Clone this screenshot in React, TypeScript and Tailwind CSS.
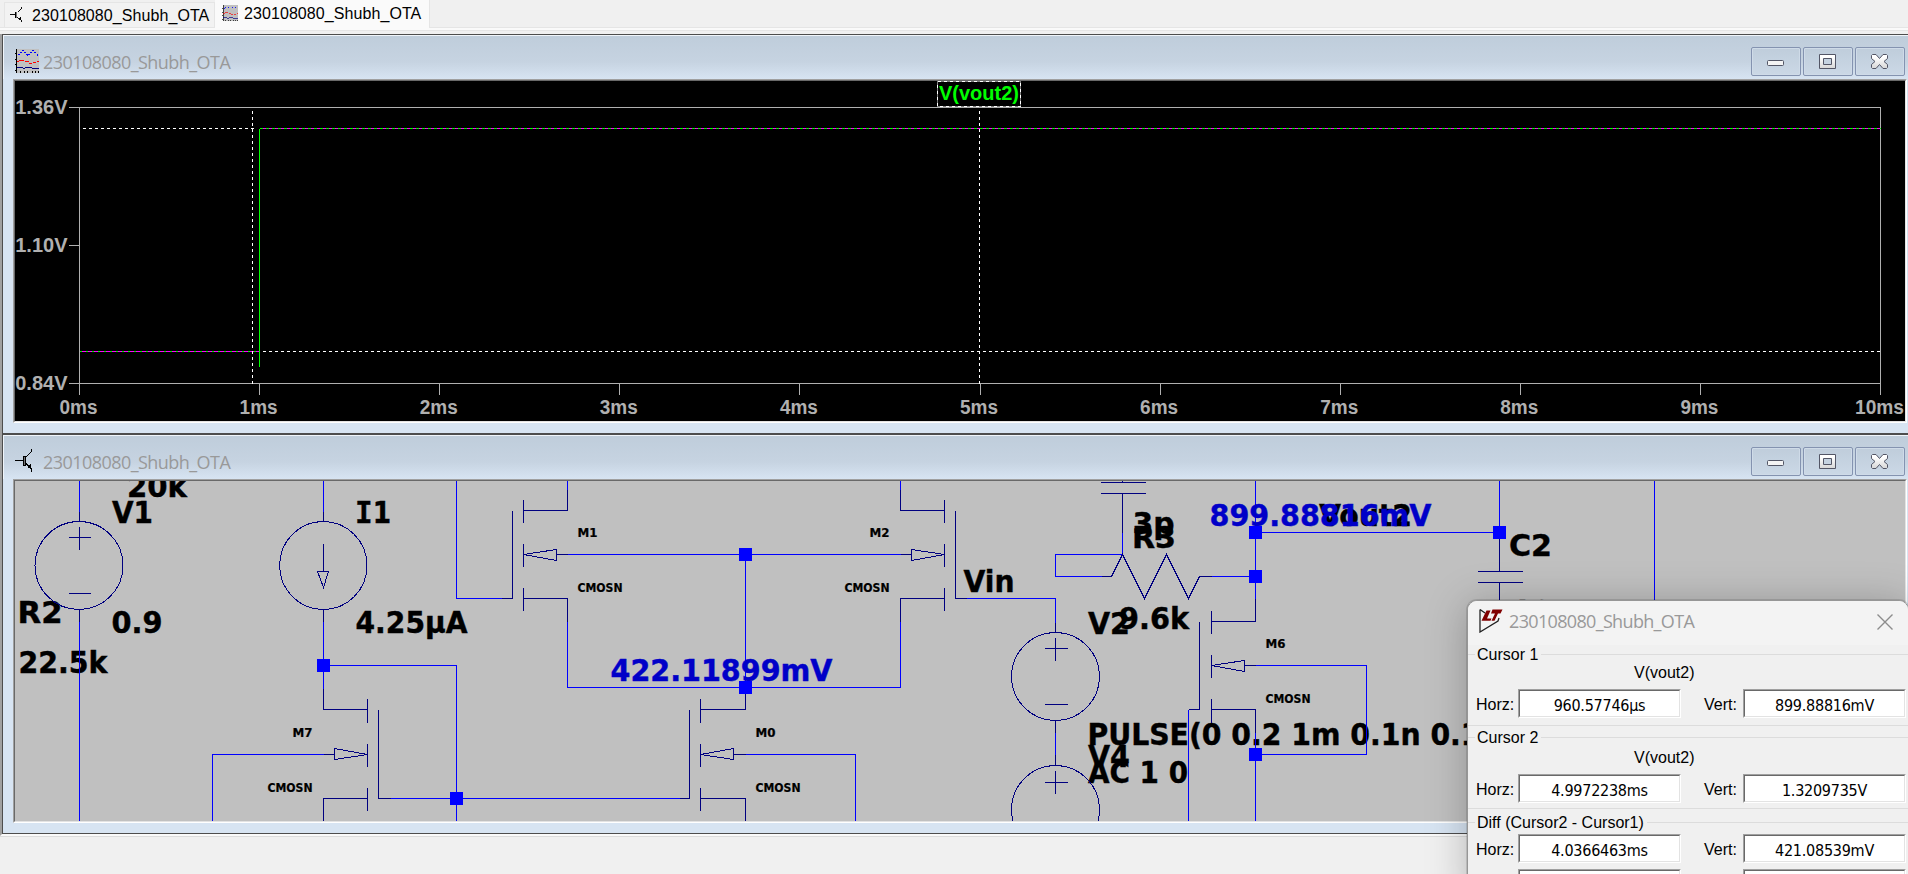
import React from "react";

const TITLE = "230108080_Shubh_OTA";

function TransistorIcon({ className }: { className: string }) {
  return (
    <svg className={className} viewBox="0 0 24 24" fill="none" stroke="#000" shapeRendering="crispEdges">
      <path d="M0 11.5H8M11 8L16.5 2.500V0M11 15L16.5 20V23" strokeWidth="1.4" />
      <path d="M8 7h3v10h-3z" fill="#000" stroke="none" />
      <path d="M9 8h1v8h-1z" fill="#777" stroke="none" />
      <path d="M12 18l4-3v5z" fill="#000" stroke="none" />
    </svg>
  );
}

function WaveIcon({ className }: { className: string }) {
  return (
    <svg className={className} viewBox="0 0 24 24" fill="none" shapeRendering="crispEdges">
      <rect x="1" width="23" height="24" fill="#c0c0c0" />
      <path d="M1.500 0V24M0 4.500H1M0 10.500H1M0 15.500H1M0 21.500H1M5.500 22V24M9.500 22V24M12.500 22V24M17.500 22V24M20.500 22V24M23.500 22V24" stroke="#000" />
      <path d="M3 6L8 1.500L13 7L18 1.500L23 7" stroke="#0000ff" strokeDasharray="1.500 1.500" strokeWidth="1.300" />
      <path d="M2 12.500H4M4 11.500H9M10 12.500H14M14 14.500H17M18 13.500H21M22 12.500H24" stroke="#ff0000" />
      <path d="M2 18.500H8M8 19.500H10M10 18.500H17M17 19.500H24" stroke="#000080" />
    </svg>
  );
}

function CaptionButton({ kind }: { kind: "min" | "max" | "close" }) {
  return (
    <div className="flex h-[29px] w-[50px] items-center justify-center rounded-[2px] border border-[#8493b0] bg-gradient-to-b from-[#bfcddb] to-[#cbd8e6] shadow-[inset_0_0_0_1px_#cfdbe8]">
      <svg width="48" height="27" viewBox="0 0 48 27">
        <defs>
          <linearGradient id={"glyph-" + kind} x1="0" y1="0" x2="0" y2="1">
            <stop offset="0.2" stopColor="#ffffff" />
            <stop offset="1" stopColor="#d6d6d6" />
          </linearGradient>
        </defs>
        {kind === "min" && (
          <rect x="15.5" y="12.500" width="16" height="5" rx="1" fill="#f4f4f4" stroke="#535666" />
        )}
        {kind === "max" && (
          <path fillRule="evenodd" d="M15.500 6.500h16v14h-16zM19.500 10.500h8v6h-8z" fill="url(#glyph-max)" stroke="#535666" strokeLinejoin="round" />
        )}
        {kind === "close" && (
          <path d="M16.500 6.500h3.500l3.500 4l3.500-4h3.500l1 1v3l-3.500 3l3.500 3v3l-1 1h-3.500l-3.500-4l-3.500 4h-3.500l-1-1v-3l3.500-3l-3.500-3v-3z" fill="url(#glyph-close)" stroke="#535666" strokeLinejoin="round" />
        )}
      </svg>
    </div>
  );
}

function ChildWindow({ icon, children }: { icon: React.ReactNode; children: React.ReactNode }) {
  return (
    <section className="flex h-[400px] shrink-0 flex-col border-b border-l border-t border-[#4d4d4d] bg-[#d7e4f2]">
      <div className="flex h-[44px] shrink-0 items-start border-l border-t border-[#f0f5fa] bg-[linear-gradient(#bfcddb,#c6d3e1_60%,#d7e4f2)] pl-[11px] pr-[3px]">
        <div className="mt-[13px] h-6 w-6">{icon}</div>
        <span className="ml-[4px] mt-[13px] font-['Open_Sans','Noto_Sans',sans-serif] text-[18px] leading-[26px] tracking-[-0.55px] text-[#999999]">{TITLE}</span>
        <div className="ml-auto mt-[11px] flex gap-[2px]">
          <CaptionButton kind="min" />
          <CaptionButton kind="max" />
          <CaptionButton kind="close" />
        </div>
      </div>
      <div className="ml-[10px] mr-px h-[344px] shrink-0 border-b border-r border-b-white border-r-white border-l border-t border-l-[#a0a0a0] border-t-[#a0a0a0]">
        <div className="h-[342px] border-b border-r border-b-[#e3e3e3] border-r-[#e3e3e3] border-l border-t border-l-[#696969] border-t-[#696969]">
          {children}
        </div>
      </div>
    </section>
  );
}

const ticks = [0, 1, 2, 3, 4, 5, 6, 7, 8, 9, 10];

function Plot() {
  return (
    <svg className="block bg-black" width="1890" height="340" viewBox="15 81 1890 340">
      <g transform="translate(0.5 0.5)" shapeRendering="crispEdges" fill="none">
        <path d="M68 107H1880V394M79 107V394M68 383H1880M68 245H79" stroke="#b0b0b0" />
        {ticks.map((t) => (
          <path key={t} d={`M${Math.round(79 + t * 180.1)} 383V394`} stroke="#b0b0b0" />
        ))}
        <path d="M82 128H256M262 351H1880" stroke="#fff" strokeDasharray="3 3" />
        <path d="M259 128H1880" stroke="#ff00ff" />
        <path d="M259 128H1880" stroke="#00ff00" strokeDasharray="3 3" />
        <path d="M79 351H259" stroke="#ff00ff" />
        <path d="M79 351H259" stroke="#00ff00" strokeDasharray="2 4" />
        <path d="M259 128V366" stroke="#00ff00" />
        <path d="M252 110V383M979 110V383" stroke="#fff" strokeDasharray="3 3" />
        <path d="M937 81H1020V106H937Z" stroke="#808080" />
        <path d="M937 81H1020V106H937Z" stroke="#fff" strokeDasharray="3 3" />
      </g>
      <g className="font-['Liberation_Sans',Arial,sans-serif] text-[20px] font-bold" fill="#b0b0b0">
        <text x="67.500" y="113.500" textAnchor="end">1.36V</text>
        <text x="67.500" y="251.500" textAnchor="end">1.10V</text>
        <text x="67.500" y="389.500" textAnchor="end">0.84V</text>
        {ticks.map((t) => (
          <text key={t} x={78.5 + t * 180.1} y="413.500" textAnchor="middle" textLength={t === 10 ? 49 : 38} lengthAdjust="spacingAndGlyphs">{t}ms</text>
        ))}
        <text x="979" y="100" textAnchor="middle" fill="#00ff00">V(vout2)</text>
      </g>
    </svg>
  );
}

const nodes = [
  [323, 665], [456, 798], [745, 554], [745, 687],
  [1255, 532], [1255, 576], [1255, 754], [1499, 532],
];

type LabelProps = { x: number; y: number; w: number; end?: boolean; children: React.ReactNode };

function Label({ x, y, w, end, children }: LabelProps) {
  return (
    <text x={x} y={y} textLength={w} lengthAdjust="spacingAndGlyphs" textAnchor={end ? "end" : "start"}>
      {children}
    </text>
  );
}

function Schematic() {
  return (
    <svg className="block bg-[#c0c0c0]" width="1890" height="340" viewBox="15 481 1890 340">
      <g className="font-['DejaVu_Sans_Condensed','DejaVu_Sans',sans-serif] text-[31px] font-bold" fill="#000" stroke="#000" strokeWidth="0.4">
        <Label x={127} y={496.500} w={60}>20k</Label>
        <Label x={112} y={522.500} w={41}>V1</Label>
        <Label x={355} y={522.500} w={36}><tspan className="font-['DejaVu_Sans_Mono',monospace]">I</tspan>1</Label>
        <Label x={111.500} y={633} w={51}>0.9</Label>
        <Label x={355.500} y={633} w={112}>4.25µA</Label>
        <Label x={17.500} y={622.500} w={45}>R2</Label>
        <Label x={18.500} y={672.500} w={89}>22.5k</Label>
        <Label x={963.500} y={591.500} w={51}>Vin</Label>
        <Label x={1088} y={633.500} w={42}>V2</Label>
        <Label x={1119} y={628.500} w={70}>9.6k</Label>
        <Label x={1087.500} y={744.500} w={393}>PULSE(0 0.2 1m 0.1n 0.1</Label>
        <Label x={1088} y={767} w={42}>V4</Label>
        <Label x={1088} y={782.500} w={100}>AC 1 0</Label>
        <Label x={1132.500} y={534} w={42}>3p</Label>
        <Label x={1132} y={547.500} w={44}>R3</Label>
        <Label x={1319} y={525.500} w={93}>Vout2</Label>
        <Label x={1509} y={555.500} w={43}>C2</Label>
        <Label x={1512} y={621.500} w={60}>10p</Label>
      </g>
      <g className="font-['DejaVu_Sans_Condensed','DejaVu_Sans',sans-serif] text-[12px] font-bold" fill="#000" stroke="#000" strokeWidth="0.2">
        <Label x={312.500} y={736.500} w={20} end>M7</Label>
        <Label x={312.500} y={791.500} w={45} end>CMOSN</Label>
        <Label x={577.500} y={536.500} w={20}>M1</Label>
        <Label x={577.500} y={591.500} w={45}>CMOSN</Label>
        <Label x={889.500} y={536.500} w={20} end>M2</Label>
        <Label x={889.500} y={591.500} w={45} end>CMOSN</Label>
        <Label x={755.500} y={736.500} w={20}>M0</Label>
        <Label x={755.500} y={791.500} w={45}>CMOSN</Label>
        <Label x={1265.500} y={647.500} w={20}>M6</Label>
        <Label x={1265.500} y={702.500} w={45}>CMOSN</Label>
      </g>
      <g transform="translate(0.5 0.5)" shapeRendering="crispEdges" fill="none">
        <path
          stroke="#0000ff"
          d="M79 480V511M79 621V821M323 480V511M323 621V688M323 665H456V821M456 480V598H501M212 821V754H323M390 798H679M567 480V489M567 554H900M745 554V687M567 621V687H900V621M900 480V489M745 754H855V821M966 598H1055V622M1122 532V554H1055V576H1101M1211 576H1255M1255 480V598M1255 532H1499V480M1055 732V754M1188 821V709M1255 665H1366V754H1255M1255 732V821M1654 480V602"
        />
        <g stroke="#000080">
          <path d="M79 511V521M79 609V621M68 537H90M79 526V549M68 593H90" />
          <circle cx="78.500" cy="565" r="44" />
          <path d="M323 511V521M323 609V621M323 543V571M317 571H328L323 587Z" />
          <ellipse cx="322.800" cy="565" rx="43.700" ry="44" />
          <path d="M323 688V709H367M367 698V722M378 709V798H390M367 743V766M334 748V759L367 754ZM323 754H334M367 787V810M367 798H323V821" />
          <path d="M501 598H512V510M523 499V522M523 543V566M523 587V610M523 510H567V489M556 549V560L523 554ZM556 554H567M523 598H567V621" />
          <path d="M966 598H955V510M944 499V522M944 543V566M944 587V610M944 510H900V489M911 549V560L944 554ZM911 554H900M944 598H900V621" />
          <path d="M679 798H689V709M700 698V722M700 743V766M700 787V810M700 709H745V687M733 748V759L700 754ZM733 754H745M700 798H745V821" />
          <path d="M1188 709H1199V621M1211 610V633M1211 654V677M1211 698V722M1211 621H1255V598M1244 660V671L1211 665ZM1244 665H1255M1211 709H1255V732" />
          <path d="M1122 480V482M1100 482H1145M1100 493H1145M1122 493V532M1101 576H1111L1122 554L1144 598L1166 554L1188 598L1199 576H1211" />
          <path d="M1055 622V632M1044 648H1067M1055 637V660M1044 704H1067M1055 720V732M1055 754V765M1044 782H1067M1055 770V793" />
          <circle cx="1055" cy="676" r="44" />
          <circle cx="1055" cy="809" r="44" />
          <path d="M1499 532V571M1477 571H1522M1477 582H1522M1499 582V602" />
        </g>
      </g>
      <g className="font-['DejaVu_Sans_Condensed','DejaVu_Sans',sans-serif] text-[31px] font-bold" fill="#0000c8" stroke="#0000c8" strokeWidth="0.4">
        <Label x={610.500} y={680.500} w={222}>422.11899mV</Label>
        <Label x={1209.500} y={525.500} w={222}>899.88816mV</Label>
      </g>
      {nodes.map(([x, y]) => (
        <rect key={`${x}-${y}`} x={x - 6} y={y - 6} width="13" height="13" fill="#0000ff" />
      ))}
    </svg>
  );
}

function Field({ label, value, vert }: { label: string; value?: string; vert?: boolean }) {
  return (
    <div className={vert ? "flex w-[202px] items-center" : "flex w-[205px] items-center"}>
      <span className={vert ? "w-[39px] pt-[2px] text-[16px]" : "w-[42px] pt-[2px] text-[16px]"}>{label}</span>
      <div className="h-[29px] w-[163px] border-b border-l border-r border-t border-b-white border-l-[#a0a0a0] border-r-white border-t-[#a0a0a0]">
        <div className="h-[27px] border-b border-l border-r border-t border-b-[#e3e3e3] border-l-[#696969] border-r-[#e3e3e3] border-t-[#696969] bg-white pt-px text-center font-['DejaVu_Sans_Condensed','DejaVu_Sans',sans-serif] text-[16px] leading-[27px] tracking-[-0.25px]">
          {value}
        </div>
      </div>
    </div>
  );
}

function FieldRow({ horz, vert }: { horz?: string; vert?: string }) {
  return (
    <div className="flex h-[29px] justify-between pl-[8px] pr-[2px]">
      <Field label={horz ? "Horz:" : ""} value={horz} />
      <Field label={vert ? "Vert:" : ""} value={vert} vert />
    </div>
  );
}

function GroupLabel({ text }: { text: string }) {
  return (
    <div className="flex h-[18px] items-center">
      <div className="h-px w-[7px] bg-[#dcdcdc]" />
      <span className="mt-[2px] whitespace-pre pl-[2px] pr-[3px] text-[16px] leading-[18px]">{text}</span>
      <div className="h-px flex-1 bg-[#dcdcdc]" />
    </div>
  );
}

function CursorDialog() {
  return (
    <div className="absolute left-[1467px] top-[600px] flex h-[300px] w-[442px] flex-col overflow-hidden rounded-[10px] border border-[#969696] bg-[#f0f0f0] font-['Liberation_Sans',Arial,sans-serif] text-black shadow-[0_0_0_1px_rgba(0,0,0,0.12),0_4px_40px_rgba(0,0,0,0.25)]">
      <div className="flex h-[44px] shrink-0 items-start bg-[#f3f3f3] pl-[11px] pr-[15px]">
        <svg className="mt-[8px]" width="24" height="24" viewBox="0 0 24 24">
          <path d="M1 0.500V23L19 12L20 9M1 0.500L6 4" fill="none" stroke="#222" strokeWidth="1.300" />
          <path d="M7.500 1.500H11.500L8 9.500H12.500L11.500 11.800H2.500L6.500 3.500Z" fill="#800000" />
          <path d="M13.500 0.500H23.500L21.500 4.500H19L15.500 11.800H12.500L16 4.500H12Z" fill="#800000" />
        </svg>
        <span className="ml-[6px] mt-[7px] font-['Open_Sans','Noto_Sans',sans-serif] text-[18px] leading-[26px] tracking-[-0.66px] text-[#999999]">{TITLE}</span>
        <svg className="ml-auto mt-[13px]" width="16" height="16" viewBox="0 0 16 16">
          <path d="M0.500 0.500L15.500 15.500M15.500 0.500L0.500 15.500" stroke="#8c8c8c" strokeWidth="1.400" />
        </svg>
      </div>
      <div className="flex h-[81px] shrink-0 flex-col border-b border-[#dcdcdc]">
        <GroupLabel text="Cursor 1" />
        <div className="-mt-px h-[27px] pl-[166px] pt-[2px] text-[16px] leading-[18px]">V(vout2)</div>
        <FieldRow horz="960.57746µs" vert="899.88816mV" />
      </div>
      <div className="flex h-[83px] shrink-0 flex-col border-b border-[#dcdcdc] pt-[2px]">
        <GroupLabel text="Cursor 2" />
        <div className="h-[28px] pl-[166px] pt-[3px] text-[16px] leading-[18px]">V(vout2)</div>
        <FieldRow horz="4.9972238ms" vert="1.3209735V" />
      </div>
      <div className="flex shrink-0 flex-col pt-[4px]">
        <GroupLabel text="Diff (Cursor2 - Cursor1)" />
        <div className="mt-[3px] flex flex-col gap-[6px]">
          <FieldRow horz="4.0366463ms" vert="421.08539mV" />
          <FieldRow />
        </div>
      </div>
    </div>
  );
}

export default function App() {
  return (
    <div className="relative h-[874px] w-[1908px] overflow-hidden bg-[#f0f0f0]">
      <div className="flex h-[28px] items-end border-b border-[#e5e5e5] pl-[4px] font-['Liberation_Sans',Arial,sans-serif] text-[16px] tracking-[0.08px] text-black">
        <div className="flex h-[25px] w-[211px] items-center border border-b-0 border-[#e5e5e5] bg-[#f2f2f2] pl-[5px]">
          <TransistorIcon className="h-4 w-4" />
          <span className="ml-[6px] mt-px leading-[18px]">{TITLE}</span>
        </div>
        <div className="-mb-px flex h-[28px] w-[215px] items-center border-r border-[#e5e5e5] bg-[#fafafa] pb-[2px] pl-[7px]">
          <WaveIcon className="h-4 w-4" />
          <span className="ml-[6px] mt-px leading-[18px]">{TITLE}</span>
        </div>
      </div>
      <div className="h-[2px] bg-[#fafafa]" />
      <div className="h-[4px] border-t border-[#e5e5e5]" />
      <div className="flex h-[802px] flex-col border-b-2 border-l-2 border-b-[#fafafa] border-l-[#a0a0a0]">
        <ChildWindow icon={<WaveIcon className="h-6 w-6" />}>
          <Plot />
        </ChildWindow>
        <ChildWindow icon={<TransistorIcon className="h-6 w-6" />}>
          <Schematic />
        </ChildWindow>
      </div>
      <div className="h-px bg-[#dcdcdc]" />
      <CursorDialog />
    </div>
  );
}
